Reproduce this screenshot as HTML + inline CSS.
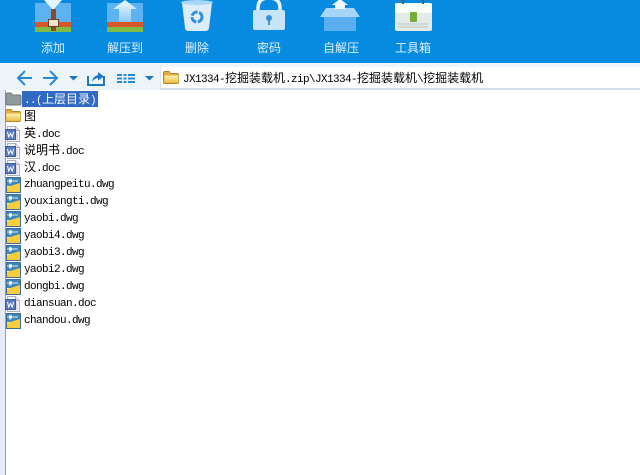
<!DOCTYPE html>
<html><head><meta charset="utf-8"><style>
html,body{margin:0;padding:0;width:640px;height:475px;overflow:hidden;background:#fff}
body{position:relative;font-family:"Liberation Mono","Noto Serif CJK SC",monospace;color:#000}
.a{position:absolute}
.bar{left:0;top:0;width:640px;height:63px;background:#078be0}
.tb{left:0;top:63px;width:640px;height:27px;background:#edf5fb}
.addr{left:160px;top:67px;width:479px;height:21px;background:#fff;border-bottom:2px solid #d3dde8;border-left:1px solid #dfe7ef}
.stripe{left:0;top:90px;width:5px;height:385px;background:#e6ebf7;border-right:1px solid #8f9fbd}
.lb{top:41px;font:12px/14px "WenQuanYi Zen Hei","Noto Sans CJK SC",sans-serif;color:#dff0fc;white-space:nowrap;text-align:center;width:60px}
.r{position:absolute;left:24px;height:14px;line-height:14px;font-size:11px;letter-spacing:-.6px;white-space:nowrap}
.c{font:12px/14px "WenQuanYi Zen Hei","Noto Sans CJK SC",sans-serif;letter-spacing:0}
svg{position:absolute;left:0;top:0}
</style></head><body>
<div class="a bar"></div>
<div class="a tb"></div>
<div class="a addr"></div>
<div class="a stripe"></div>

<svg width="640" height="475" viewBox="0 0 640 475">
<defs>
<linearGradient id="up" x1="0" y1="0" x2="0" y2="1"><stop offset="0" stop-color="#f4fbff"/><stop offset="1" stop-color="#8cc8f5"/></linearGradient>
<linearGradient id="fy" x1="0" y1="0" x2="0" y2="1"><stop offset="0" stop-color="#fdf0b0"/><stop offset="1" stop-color="#f0c24e"/></linearGradient>
<g id="fo"><path d="M7 .5h4l1.500 2h6.500q1.500 0 1.500 1.500v7q0 1.500-1.500 1.500h-12q-1.500 0-1.500-1.500v-9q0-1.500 1.500-1.500z" fill="#e0b040" stroke="#b28a2c"/><path d="M6.500 4.500h14v7h-14z" fill="url(#fy)"/></g>
<g id="w"><path d="M7.500.5h8l4 4v11h-12z" fill="#f6f7fa" stroke="#a9afbc"/><path d="M15.500.5v4h4" fill="#dfe3ea" stroke="#a9afbc"/><path d="M15 7h3M15 9h3M15 11h3M15 13h3" stroke="#c2c8d3"/><rect x="5.500" y="3.500" width="10" height="10" fill="#5b7cc0" stroke="#3f5d9e"/><path d="M7.500 6l1.200 5 1.800-3.500 1.800 3.500 1.200-5" stroke="#fff" fill="none"/></g>
<g id="d"><rect x="6.500" y=".5" width="14" height="15" fill="#fff" stroke="#3f6f95"/><rect x="7" y="1" width="13" height="8" fill="#3e86b8"/><path d="M7 10l13-4v9H7z" fill="#f7cd3e"/><path d="M7 4h11M10 2v5" stroke="#d8eefa"/><rect x="9" y="2.500" width="3" height="3" fill="#fff"/></g>
</defs>

<!-- 添加 -->
<rect x="35" y="3" width="36" height="19" fill="#5db2f2"/>
<path d="M44 0h18l-9 10z" fill="#e4f4fd"/>
<rect x="35" y="22" width="36" height="5" fill="#d5572a"/>
<rect x="35" y="27" width="36" height="5" fill="#7fbc45"/>
<rect x="51" y="9" width="5" height="22" fill="#8e4a26"/>
<rect x="48.500" y="19.500" width="10" height="7" fill="#efe3cf" stroke="#6c4128"/>
<!-- 解压到 -->
<rect x="107" y="3" width="36" height="19" fill="#5db2f2"/>
<path d="M119 22v-13h-6l12-9 12 9h-6v13z" fill="url(#up)"/>
<rect x="107" y="22" width="36" height="5" fill="#d5572a"/>
<rect x="107" y="27" width="36" height="5" fill="#7fbc45"/>
<!-- 删除 -->
<path d="M182 3h30l-3 25q-.5 3-4 3h-16q-3.500 0-4-3z" fill="#dcedf9"/>
<ellipse cx="197" cy="2.500" rx="16" ry="2.500" fill="#a8d6f5"/>
<circle cx="197" cy="17" r="5" fill="none" stroke="#2f8fd8" stroke-width="3" stroke-dasharray="7 1.500"/>
<!-- 密码 -->
<path d="M258 12V8q0-10 11-10t11 10v4" fill="none" stroke="#e2f0fb" stroke-width="3.500"/>
<rect x="253" y="10" width="32" height="20" rx="2" fill="#c7e4fa"/>
<circle cx="269" cy="18" r="3" fill="#3a8fd6"/>
<rect x="268" y="19" width="2" height="6" fill="#3a8fd6"/>
<!-- 自解压 -->
<path d="M324 15h32v16h-32z" fill="#5aaef0"/>
<path d="M320 17l6-9h28l6 9z" fill="#a7d5f7"/>
<path d="M335 9V5h-3l8-6 8 6h-3v4z" fill="#eef7fd"/>
<!-- 工具箱 -->
<rect x="395" y="3" width="37" height="28" rx="2" fill="#e4eae8"/>
<path d="M395 13v-8q0-2 2-2h33q2 0 2 2v8z" fill="#fbfdf9"/>
<rect x="410" y="12" width="7" height="10" rx="1" fill="#77ad35"/>
<path d="M403 0v4M423 0v4" stroke="#4d6570" stroke-width="2"/>
<path d="M398 24h30M398 27h30" stroke="#b9c6cc"/>

<!-- nav -->
<path d="M25 71l-7 7 7 7M18 78h14" fill="none" stroke="#2a88d8" stroke-width="2"/>
<path d="M50 71l7 7-7 7M43 78h14" fill="none" stroke="#2a88d8" stroke-width="2"/>
<path d="M69 76h9l-4.500 4.500z" fill="#2474bb"/>
<path d="M88 76v9h16v-9" fill="none" stroke="#1f78c4" stroke-width="2"/>
<path d="M92 82q1-6 6-7v-3l6 4.500-6 4v-2.500q-3 0-6 4z" fill="#1f78c4"/>
<path d="M117 74h5v2h-5zM117 77.500h5v2h-5zM117 81h5v2h-5zM123.500 74h3v2h-3zM123.500 77.500h3v2h-3zM123.500 81h3v2h-3zM128 74h7v2h-7zM128 77.500h7v2h-7zM128 81h7v2h-7z" fill="#2a88d0"/>
<path d="M145 76h9l-4.500 4.500z" fill="#2474bb"/>

<!-- address folder -->
<use href="#fo" x="158" y="71"/>

<!-- file icons -->
<path d="M7 93h4l1.500 2h7q1.500 0 1.500 1.500v7q0 1.500-1.500 1.500h-12q-1.500 0-1.500-1.500v-9q0-1.500 1.500-1.500z" fill="#8f9a9e" stroke="#6c7880"/>
<use href="#fo" x="0" y="109"/>
<use href="#w" y="126"/><use href="#w" y="143"/><use href="#w" y="160"/>
<use href="#d" y="177"/><use href="#d" y="194"/><use href="#d" y="211"/><use href="#d" y="228"/><use href="#d" y="245"/><use href="#d" y="262"/><use href="#d" y="279"/>
<use href="#w" y="296"/>
<use href="#d" y="313"/>
</svg>

<div class="a lb" style="left:23px">添加</div>
<div class="a lb" style="left:95px">解压到</div>
<div class="a lb" style="left:167px">删除</div>
<div class="a lb" style="left:239px">密码</div>
<div class="a lb" style="left:311px">自解压</div>
<div class="a lb" style="left:383px">工具箱</div>

<div class="r" style="left:183px;top:71px">JX1334-<span class="c">挖掘装载机</span>.zip\JX1334-<span class="c">挖掘装载机</span>\<span class="c">挖掘装载机</span></div>

<div class="a" style="left:22px;top:91px;width:76px;height:16px;background:#316ac5"></div>
<div class="r" style="top:92px;color:#fff">..(<span class="c">上层目录</span>)</div>
<div class="r c" style="top:109px">图</div>
<div class="r" style="top:126px"><span class="c">英</span>.doc</div>
<div class="r" style="top:143px"><span class="c">说明书</span>.doc</div>
<div class="r" style="top:160px"><span class="c">汉</span>.doc</div>
<div class="r" style="top:178px">zhuangpeitu.dwg</div>
<div class="r" style="top:195px">youxiangti.dwg</div>
<div class="r" style="top:212px">yaobi.dwg</div>
<div class="r" style="top:229px">yaobi4.dwg</div>
<div class="r" style="top:246px">yaobi3.dwg</div>
<div class="r" style="top:263px">yaobi2.dwg</div>
<div class="r" style="top:280px">dongbi.dwg</div>
<div class="r" style="top:297px">diansuan.doc</div>
<div class="r" style="top:314px">chandou.dwg</div>
</body></html>
